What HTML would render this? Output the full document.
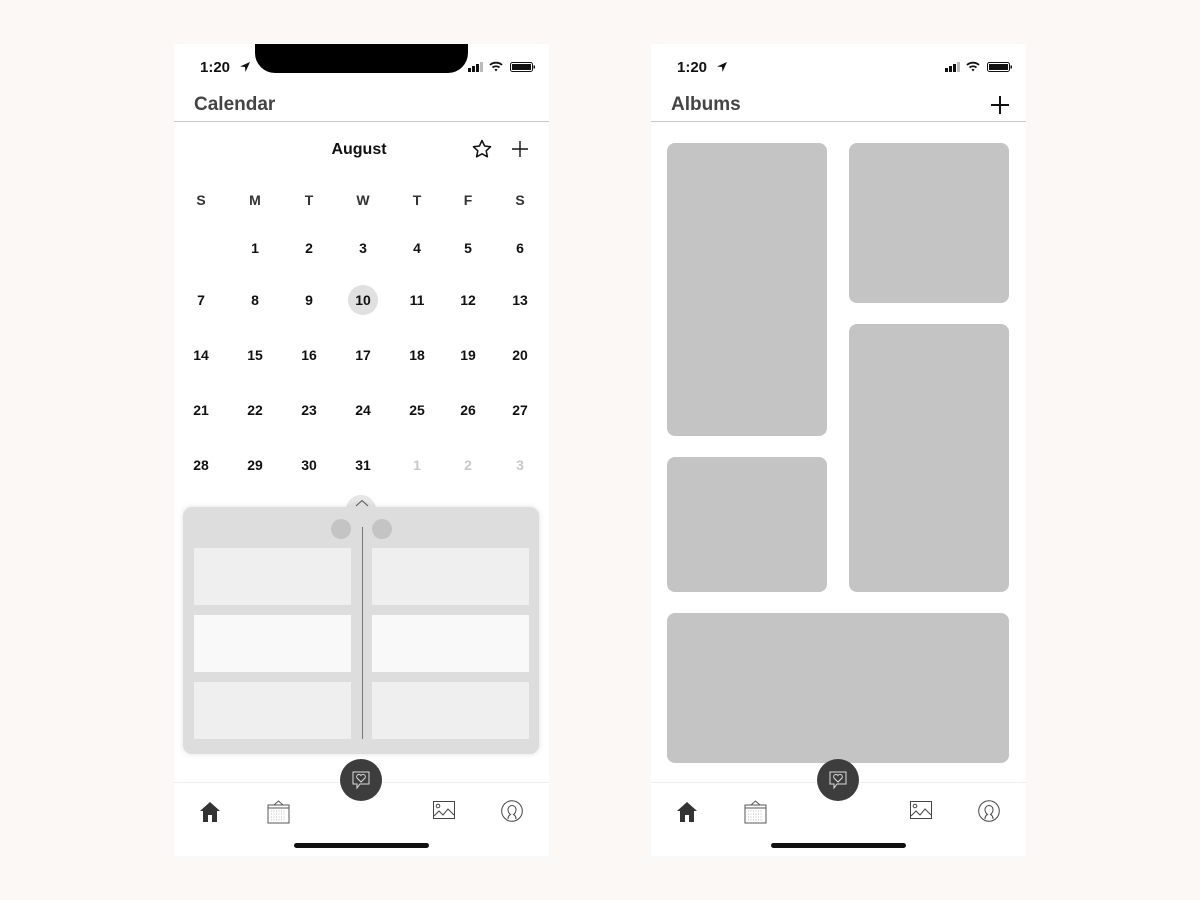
<!DOCTYPE html>
<html><head><meta charset="utf-8"><style>
*{margin:0;padding:0;box-sizing:border-box}
body{width:1200px;height:900px;background:#fcf8f6;position:relative;font-family:"Liberation Sans",sans-serif;overflow:hidden}
.ph{position:absolute;top:44px;width:375px;height:812px;background:#fff;overflow:hidden}
.a{position:absolute}
.t{position:absolute;transform:translate(-50%,-50%);font-size:14px;color:#111;white-space:nowrap}
.time{left:26px;top:15px;font-size:15px;font-weight:bold;color:#111}
.title{left:20px;top:50px;font-size:19px;font-weight:bold;color:#444}
.hl{left:0;right:0;top:77px;height:1px;background:#c8c8c8}
.tab{left:0;right:0;top:738px;height:1px;background:#eee}
.hi{left:120px;top:799px;width:135px;height:5px;border-radius:3px;background:#111}
.fab{left:166px;top:715px;width:42px;height:42px;border-radius:50%;background:#3d3d3d}
.al{position:absolute;background:#c4c4c4;border-radius:8px}
.cell{position:absolute;width:157px;height:57px;background:#efefef}
</style></head><body>

<!-- phone 1 -->
<div class="ph" style="left:174px">
  <div class="a" style="left:81px;top:-10px;width:213px;height:39px;background:#000;border-radius:0 0 20px 20px"></div>
  <div class="a time">1:20</div>
  <svg class="a" style="left:65px;top:17px" width="12" height="12" viewBox="0 0 12 12"><path d="M11 1L1 5.5l5 .5.5 5z" fill="#111"/></svg>
  <svg class="a" style="left:294px;top:17px" width="70" height="12" viewBox="0 0 70 12"><rect x="0" y="7" width="3" height="4" fill="#111"/><rect x="4" y="5" width="3" height="6" fill="#111"/><rect x="8" y="3" width="3" height="8" fill="#111"/><rect x="12" y="1" width="3" height="10" fill="#bbb"/><path d="M22 4a9 9 0 0 1 12 0M24.5 6.5a5.5 5.5 0 0 1 7 0" stroke="#111" stroke-width="1.8" fill="none"/><path d="M26.5 8.5l1.5 2 1.5-2a2 2 0 0 0-3 0z" fill="#111"/><rect x="42.5" y="1.5" width="22" height="9" rx="2" fill="none" stroke="#111"/><rect x="44" y="3" width="19" height="6" fill="#111"/><rect x="65.5" y="4.5" width="1.5" height="3" fill="#111"/></svg>
  <div class="a title">Calendar</div>
  <div class="a hl"></div>
  <div class="t" style="left:185px;top:106px;font-size:16px;font-weight:bold">August</div>
  <svg class="a" style="left:298px;top:95px" width="20" height="20" viewBox="0 0 20 20"><path d="M10 1.5l2.6 5.5 6 .7-4.4 4.1 1.2 6L10 14.8l-5.4 3 1.2-6L1.4 7.7l6-.7z" fill="none" stroke="#111" stroke-width="1.5" stroke-linejoin="round"/></svg>
  <svg class="a" style="left:338px;top:97px" width="16" height="16"><path d="M8 0v16M0 8h16" stroke="#111" stroke-width="1.4"/></svg>
  <div class="a" style="left:174px;top:241px;width:30px;height:30px;border-radius:50%;background:#e0e0e0"></div>
  <div id="cal"></div>
  <!-- panel -->
  <div class="a" style="left:172px;top:451px;width:30px;height:30px;border-radius:50%;background:#e6e6e6"></div>
  <div class="a" style="left:9px;top:463px;width:356px;height:247px;border-radius:9px;background:#dddddd;box-shadow:0 0 6px rgba(0,0,0,.12)"></div>
  <div class="a" style="left:172px;top:457px;width:30px;height:24px;border-radius:50% 50% 0 0;background:#dddddd"></div>
  <svg class="a" style="left:181px;top:455px" width="14" height="8"><path d="M1 7l6-5.5 6 5.5" stroke="#555" fill="none"/></svg>
  <div class="a" style="left:157px;top:475px;width:20px;height:20px;border-radius:50%;background:#c4c4c4"></div>
  <div class="a" style="left:198px;top:475px;width:20px;height:20px;border-radius:50%;background:#c4c4c4"></div>
  <div class="a" style="left:188px;top:483px;width:1px;height:212px;background:#777"></div>
  <div class="cell" style="left:20px;top:504px"></div><div class="cell" style="left:198px;top:504px"></div>
  <div class="cell" style="left:20px;top:571px;background:#f9f9f9"></div><div class="cell" style="left:198px;top:571px;background:#f9f9f9"></div>
  <div class="cell" style="left:20px;top:638px"></div><div class="cell" style="left:198px;top:638px"></div>
  <div class="a tab"></div>
  <div class="TB"></div>
</div>

<!-- phone 2 -->
<div class="ph" style="left:651px">
  <div class="a time">1:20</div>
  <svg class="a" style="left:65px;top:17px" width="12" height="12" viewBox="0 0 12 12"><path d="M11 1L1 5.5l5 .5.5 5z" fill="#111"/></svg>
  <svg class="a" style="left:294px;top:17px" width="70" height="12" viewBox="0 0 70 12"><rect x="0" y="7" width="3" height="4" fill="#111"/><rect x="4" y="5" width="3" height="6" fill="#111"/><rect x="8" y="3" width="3" height="8" fill="#111"/><rect x="12" y="1" width="3" height="10" fill="#bbb"/><path d="M22 4a9 9 0 0 1 12 0M24.5 6.5a5.5 5.5 0 0 1 7 0" stroke="#111" stroke-width="1.8" fill="none"/><path d="M26.5 8.5l1.5 2 1.5-2a2 2 0 0 0-3 0z" fill="#111"/><rect x="42.5" y="1.5" width="22" height="9" rx="2" fill="none" stroke="#111"/><rect x="44" y="3" width="19" height="6" fill="#111"/><rect x="65.5" y="4.5" width="1.5" height="3" fill="#111"/></svg>
  <div class="a title">Albums</div>
  <svg class="a" style="left:340px;top:52px" width="18" height="18"><path d="M9 0v18M0 9h18" stroke="#111" stroke-width="2"/></svg>
  <div class="a hl"></div>
  <div class="al" style="left:16px;top:99px;width:160px;height:293px"></div>
  <div class="al" style="left:198px;top:99px;width:160px;height:160px"></div>
  <div class="al" style="left:198px;top:280px;width:160px;height:268px"></div>
  <div class="al" style="left:16px;top:413px;width:160px;height:135px"></div>
  <div class="al" style="left:16px;top:569px;width:342px;height:150px"></div>
  <div class="a tab"></div>
  <div class="TB"></div>
</div>

<template id="tb">
  <div class="a fab"></div>
  <svg class="a" style="left:176px;top:725px" width="22" height="22" viewBox="0 0 22 22"><path d="M3 3h16v12H10l-3 4v-4H3z" fill="none" stroke="#ddd" stroke-width="1"/><path d="M11 13l-4-4a2 2 0 0 1 4-2.5 2 2 0 0 1 4 2.5z" fill="none" stroke="#ddd" stroke-width="1"/></svg>
  <svg class="a" style="left:25px;top:757px" width="22" height="22" viewBox="0 0 22 22"><path d="M11 1L1 10h3v11h5v-7h4v7h5V10h3z" fill="#333"/></svg>
  <svg class="a" style="left:93px;top:756px" width="23" height="24" viewBox="0 0 23 24"><rect x="1" y="5" width="21" height="18" fill="none" stroke="#555"/><path d="M1 8h21M7 5l4.5-4 4.5 4" stroke="#555" fill="none"/><path d="M4 11h15M4 14h15M4 17h15M4 20h15" stroke="#bbb" stroke-dasharray="1 1.5"/></svg>
  <svg class="a" style="left:259px;top:757px" width="22" height="18" viewBox="0 0 22 18"><rect x=".5" y=".5" width="21" height="17" fill="none" stroke="#444"/><circle cx="5" cy="5" r="1.8" fill="none" stroke="#444"/><path d="M1 15l5-5 4 4 5-6 6 6" fill="none" stroke="#444"/></svg>
  <svg class="a" style="left:327px;top:756px" width="22" height="22" viewBox="0 0 22 22"><circle cx="11" cy="11" r="10.3" fill="none" stroke="#444"/><path d="M7 19c0-3 1.5-4 2.5-4.5-2-1.5-2.5-3-2.5-5a4 4 0 0 1 8 0c0 2-.5 3.5-2.5 5 1 .5 2.5 1.5 2.5 4.5" fill="none" stroke="#444"/></svg>
  <div class="a hi"></div>
</template>

<script>
var tb=document.getElementById('tb').innerHTML;
document.querySelectorAll('.TB').forEach(function(e){e.outerHTML=tb});
var xs=[27,81,135,189,243,294,346];
var h='',d='SMTWTFS';
for(var i=0;i<7;i++)h+='<div class="t" style="left:'+xs[i]+'px;top:156px;font-weight:bold;color:#333">'+d[i]+'</div>';
var ys=[204,256,311,366,421],n=1,nx=1;
for(var r=0;r<5;r++)for(var c=0;c<7;c++){
 if(r==0&&c==0)continue;
 var txt,col='#111';
 if(n<=31){txt=n++;}else{txt=nx++;col='#c8c8c8';}
 h+='<div class="t" style="left:'+xs[c]+'px;top:'+ys[r]+'px;font-weight:bold;color:'+col+'">'+txt+'</div>';
}
document.getElementById('cal').outerHTML=h;
</script>
</body></html>
